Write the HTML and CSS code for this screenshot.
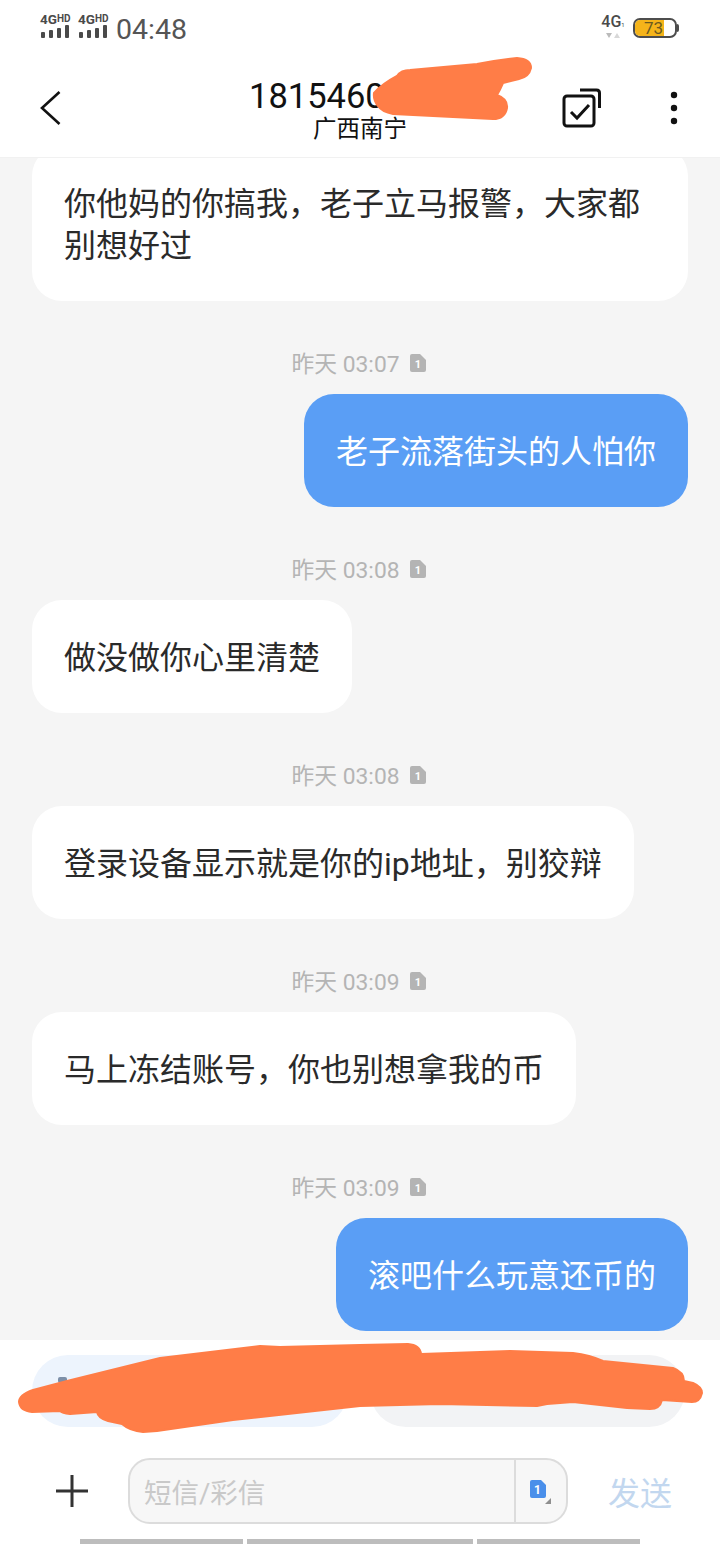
FILE: index.html
```html
<!DOCTYPE html>
<html lang="zh-CN">
<head>
<meta charset="utf-8">
<title>短信</title>
<link rel="stylesheet" href="styles.css">
</head>
<body>
<div class="page">
  <div class="top">
    <div class="status">
      <div class="status-left">
        <div class="sig">
          <div class="sig-label"><span class="sig-4g">4G</span><span class="sig-hd">HD</span></div>
          <svg class="sig-bars" width="30" height="14" viewBox="0 0 30 14"><rect x="1" y="7" width="4" height="6" rx="1"/><rect x="9" y="5" width="4" height="8" rx="1"/><rect x="17" y="3" width="4" height="10" rx="1"/><rect x="25" y="0" width="4" height="13" rx="1"/></svg>
        </div>
        <div class="sig">
          <div class="sig-label"><span class="sig-4g">4G</span><span class="sig-hd">HD</span></div>
          <svg class="sig-bars" width="30" height="14" viewBox="0 0 30 14"><rect x="1" y="7" width="4" height="6" rx="1"/><rect x="9" y="5" width="4" height="8" rx="1"/><rect x="17" y="3" width="4" height="10" rx="1"/><rect x="25" y="0" width="4" height="13" rx="1"/></svg>
        </div>
        <span class="clock">04:48</span>
      </div>
      <div class="status-right">
        <div class="net">
          <div class="net-label"><span class="net-4g">4G</span><span class="net-1">1</span></div>
          <svg class="net-arrows" width="14" height="6" viewBox="0 0 14 6"><path d="M0 0h6l-3 5z" fill="#bbb"/><path d="M8 5h6l-3-5z" fill="#d8d8d8"/></svg>
        </div>
        <div class="battery">
          <div class="battery-body"><div class="battery-fill"></div><span class="battery-num">73</span></div>
          <div class="battery-nub"></div>
        </div>
      </div>
    </div>
    <header class="header">
      <svg class="back" width="24" height="36" viewBox="0 0 24 36"><path d="M20.500 2 3 18l17.500 16" fill="none" stroke="#111" stroke-width="2.600"/></svg>
      <div class="title">
        <div class="number">1815460</div>
        <div class="place">广西南宁</div>
      </div>
      <svg class="multi" width="40" height="40" viewBox="0 0 40 40"><rect x="2" y="8" width="30" height="30" rx="3" fill="none" stroke="#111" stroke-width="3"/><path d="M18 2h16.500q3 0 3 3V20" fill="none" stroke="#111" stroke-width="3"/><path d="M9 24l6 6 12-13" fill="none" stroke="#111" stroke-width="3"/></svg>
      <svg class="more" width="8" height="34" viewBox="0 0 8 34"><circle cx="4" cy="4" r="3.200"/><circle cx="4" cy="17" r="3.200"/><circle cx="4" cy="30" r="3.200"/></svg>
    </header>
  </div>

  <main class="thread">
    <div class="bubble in">你他妈的你搞我，老子立马报警，大家都别想好过</div>

    <div class="stamp"><span class="stamp-text">昨天 03:07</span><svg class="sim" width="16" height="18" viewBox="0 0 16 18"><path d="M2 0h8l6 6v10a2 2 0 0 1-2 2H2a2 2 0 0 1-2-2V2a2 2 0 0 1 2-2z" fill="#b4b4b4"/><text x="8" y="14" text-anchor="middle" class="sim-num">1</text></svg></div>
    <div class="bubble out">老子流落街头的人怕你</div>

    <div class="stamp"><span class="stamp-text">昨天 03:08</span><svg class="sim" width="16" height="18" viewBox="0 0 16 18"><path d="M2 0h8l6 6v10a2 2 0 0 1-2 2H2a2 2 0 0 1-2-2V2a2 2 0 0 1 2-2z" fill="#b4b4b4"/><text x="8" y="14" text-anchor="middle" class="sim-num">1</text></svg></div>
    <div class="bubble in">做没做你心里清楚</div>

    <div class="stamp"><span class="stamp-text">昨天 03:08</span><svg class="sim" width="16" height="18" viewBox="0 0 16 18"><path d="M2 0h8l6 6v10a2 2 0 0 1-2 2H2a2 2 0 0 1-2-2V2a2 2 0 0 1 2-2z" fill="#b4b4b4"/><text x="8" y="14" text-anchor="middle" class="sim-num">1</text></svg></div>
    <div class="bubble in">登录设备显示就是你的ip地址，别狡辩</div>

    <div class="stamp"><span class="stamp-text">昨天 03:09</span><svg class="sim" width="16" height="18" viewBox="0 0 16 18"><path d="M2 0h8l6 6v10a2 2 0 0 1-2 2H2a2 2 0 0 1-2-2V2a2 2 0 0 1 2-2z" fill="#b4b4b4"/><text x="8" y="14" text-anchor="middle" class="sim-num">1</text></svg></div>
    <div class="bubble in">马上冻结账号，你也别想拿我的币</div>

    <div class="stamp"><span class="stamp-text">昨天 03:09</span><svg class="sim" width="16" height="18" viewBox="0 0 16 18"><path d="M2 0h8l6 6v10a2 2 0 0 1-2 2H2a2 2 0 0 1-2-2V2a2 2 0 0 1 2-2z" fill="#b4b4b4"/><text x="8" y="14" text-anchor="middle" class="sim-num">1</text></svg></div>
    <div class="bubble out">滚吧什么玩意还币的</div>
  </main>

  <div class="composer">
    <div class="quick">
      <div class="pill pill-blue"><span class="pill-mark"></span></div>
      <div class="pill pill-grey"></div>
    </div>
    <div class="input-row">
      <svg class="plus" width="34" height="34" viewBox="0 0 34 34"><path d="M17 1v32M1 17h32" fill="none" stroke="#333" stroke-width="3"/></svg>
      <div class="input">
        <span class="placeholder">短信/彩信</span>
        <div class="sim-pick">
          <svg width="22" height="24" viewBox="0 0 22 24"><path d="M2 0h9l5 5v11a2 2 0 0 1-2 2H2a2 2 0 0 1-2-2V2a2 2 0 0 1 2-2z" fill="#4a8fea"/><text x="7.500" y="14" text-anchor="middle" class="pick-num">1</text><path d="M21 18v6h-6z" fill="#8f8f8f"/></svg>
        </div>
      </div>
      <span class="send">发送</span>
    </div>
    <div class="navbar"><i></i><i class="mid"></i><i></i></div>
  </div>

  <svg class="scribble" width="720" height="1544" viewBox="0 0 720 1544">
    <path d="M374 93 Q382 84 397 76 Q401 70 410 70 L477 64 Q497 60 517 58 Q531 59 531 68 Q529 77 519 79 L503 83 Q500 90 497 95 Q508 99 507 108 Q505 119 493 119 L393 114 Q382 112 378 106 Q373 100 374 93Z"/>
    <path d="M19 1402 Q19 1395 33 1390 L67 1381 L160 1358 L260 1346 L280 1347 L360 1345 L408 1344 Q420 1345 421 1354 L510 1351 L573 1353 Q590 1355 603 1361 L673 1368 Q684 1372 684 1381 L693 1383 Q702 1387 702 1393 Q700 1402 692 1402 L662 1400 Q660 1409 650 1409 L627 1408 L573 1402 L547 1404 L537 1406 L440 1404 L360 1406 L233 1420 L157 1431 L143 1432 Q130 1431 122 1424 L108 1421 Q98 1418 97 1412 L70 1414 Q62 1413 60 1411 L32 1412 Q20 1411 19 1402Z"/>
  </svg>
</div>
</body>
</html>
```

FILE: styles.css
```css
* {
  box-sizing: border-box;
  margin: 0;
  padding: 0;
}

html,
body {
  width: 720px;
  height: 1544px;
  overflow: hidden;
}

body {
  font-family: Roboto, "Noto Sans CJK SC", sans-serif;
  background: #f5f5f5;
}

.page {
  position: relative;
  width: 720px;
  height: 1544px;
  display: flex;
  flex-direction: column;
  overflow: hidden;
}

.top {
  position: relative;
  z-index: 2;
  flex: none;
  height: 158px;
  background: #fff;
  border-bottom: 1px solid #f1f1f1;
}

.status {
  height: 58px;
  padding: 14px 41px 0 40px;
  display: flex;
  justify-content: space-between;
}

.status-left {
  display: flex;
  align-items: flex-start;
  gap: 8px;
}

.sig {
  width: 30px;
  display: flex;
  flex-direction: column;
  color: #4a4a4a;
}

.sig-label {
  height: 11px;
  display: flex;
  align-items: flex-start;
  font-weight: 700;
  white-space: nowrap;
}

.sig-4g {
  font-size: 13.500px;
  line-height: 11px;
}

.sig-hd {
  font-size: 10px;
  line-height: 9px;
}

.sig-bars {
  display: block;
  margin-top: 0;
  fill: #4a4a4a;
}

.clock {
  margin-left: 0;
  font-size: 28.500px;
  line-height: 32px;
  color: #555;
}

.status-right {
  display: flex;
  align-items: flex-start;
  gap: 9px;
}

.net {
  width: 22px;
  padding-top: 1px;
  display: flex;
  flex-direction: column;
  align-items: center;
}

.net-label {
  height: 15px;
  display: flex;
  align-items: flex-end;
  color: #4a4a4a;
  white-space: nowrap;
}

.net-4g {
  font-size: 16px;
  line-height: 16px;
  font-weight: 500;
}

.net-1 {
  font-size: 6px;
  line-height: 10px;
}

.net-arrows {
  display: block;
  margin-top: 3px;
}

.battery {
  margin-top: 4px;
  display: flex;
  align-items: center;
}

.battery-body {
  position: relative;
  width: 44px;
  height: 20px;
  border: 2px solid #4d4d4d;
  border-radius: 7px;
  overflow: hidden;
  background: #fff;
}

.battery-fill {
  width: 29px;
  height: 100%;
  background: #f5b41a;
}

.battery-num {
  position: absolute;
  left: 9px;
  top: -1px;
  font-size: 17px;
  line-height: 18px;
  color: #6b5a20;
}

.battery-nub {
  width: 2px;
  height: 8px;
  background: #4d4d4d;
  border-radius: 0 2px 2px 0;
}

.header {
  position: relative;
  height: 99px;
  display: flex;
  align-items: flex-start;
}

.back {
  flex: none;
  margin: 32px 0 0 39px;
}

.title {
  position: absolute;
  left: 249px;
  top: 20px;
  width: 222px;
  display: flex;
  flex-direction: column;
}

.number {
  font-size: 34.500px;
  line-height: 36px;
  color: #111;
}

.place {
  font-family: "Noto Sans CJK SC", sans-serif;
  font-size: 23.500px;
  line-height: 26px;
  color: #111;
  text-align: center;
}

.multi {
  flex: none;
  margin: 30px 0 0 499px;
}

.more {
  flex: none;
  margin: 33px 0 0 68px;
  fill: #111;
}

.thread {
  flex: 1;
  min-height: 0;
  padding: 0 32px 9px;
  display: flex;
  flex-direction: column;
  justify-content: flex-end;
  align-items: flex-start;
  overflow: hidden;
  background: #f5f5f5;
}

.bubble {
  flex: none;
  max-width: 656px;
  padding: 36.500px 32px 34.500px;
  border-radius: 30px;
  font-family: Roboto, "Noto Sans CJK SC", sans-serif;
  font-size: 32px;
  line-height: 42px;
}

.in {
  background: #fff;
  color: #2a2a2a;
}

.out {
  align-self: flex-end;
  background: #5a9ef5;
  color: #fff;
}

.stamp {
  flex: none;
  align-self: stretch;
  height: 30px;
  margin: 48px 0 15px;
  padding-right: 3px;
  display: flex;
  align-items: center;
  justify-content: center;
  gap: 10px;
  font-family: Roboto, "Noto Sans CJK SC", sans-serif;
  font-size: 22.800px;
  line-height: 30px;
  color: #b4b4b4;
}

.stamp-text {
  padding-top: 1px;
}

.sim {
  flex: none;
  margin-top: -2px;
}

.sim-num {
  font-size: 11px;
  font-weight: 700;
  fill: #fff;
}

.composer {
  flex: none;
  height: 204px;
  background: #fff;
  display: flex;
  flex-direction: column;
}

.quick {
  height: 72px;
  margin: 15px 35px 0 32px;
  display: flex;
  gap: 22px;
}

.pill {
  flex: 1;
  position: relative;
  border-radius: 36px;
}

.pill-blue {
  background: #edf4fd;
}

.pill-grey {
  background: #f2f3f5;
}

.pill-mark {
  position: absolute;
  left: 26px;
  top: 22px;
  width: 9px;
  height: 6px;
  background: #7d8fa8;
  border-radius: 2px;
}

.input-row {
  height: 66px;
  margin-top: 31px;
  display: flex;
  align-items: center;
  position: relative;
}

.plus {
  flex: none;
  margin-left: 55px;
}

.input {
  flex: none;
  width: 440px;
  height: 66px;
  margin-left: 39px;
  border: 2px solid #dcdcdc;
  border-radius: 22px;
  background: #f7f7f7;
  display: flex;
  align-items: center;
}

.placeholder {
  flex: 1;
  padding-left: 14px;
  font-family: Roboto, "Noto Sans CJK SC", sans-serif;
  font-size: 27.500px;
  color: #c9c9c9;
}

.sim-pick {
  flex: none;
  width: 52px;
  height: 100%;
  padding: 20px 0 0 14px;
  border-left: 2px solid #dcdcdc;
}

.sim-pick svg {
  display: block;
}

.pick-num {
  font-size: 12px;
  font-weight: 700;
  fill: #fff;
}

.send {
  flex: none;
  margin-left: 40px;
  font-family: "Noto Sans CJK SC", sans-serif;
  font-size: 32px;
  color: #c2d7ef;
}

.navbar {
  height: 5px;
  margin: 15px 80px 0;
  display: flex;
  gap: 4px;
}

.navbar i {
  flex: 163;
  background: #bdbdbd;
}

.navbar .mid {
  flex: 226;
}

.scribble {
  position: absolute;
  left: 0;
  top: 0;
  z-index: 3;
  pointer-events: none;
  fill: #ff7d47;
  stroke: #ff7d47;
  stroke-width: 2;
  stroke-linejoin: round;
}
```
